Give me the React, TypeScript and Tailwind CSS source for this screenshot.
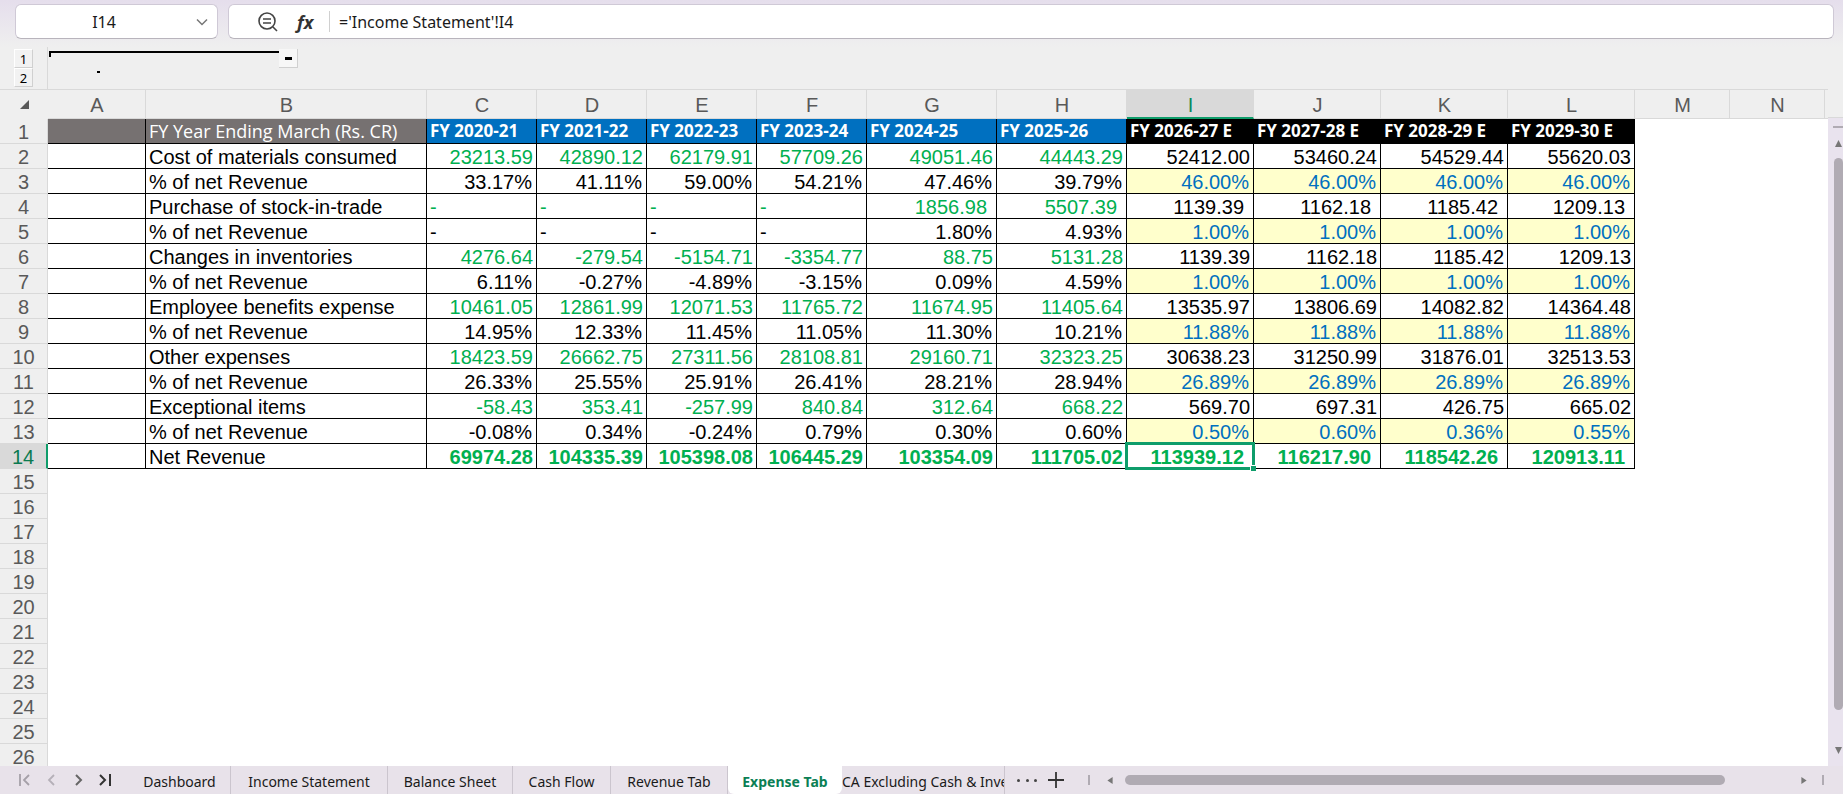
import React, { useState } from "react";
import clsx from "clsx";

type Kind = "label" | "amount" | "percent" | "total";

interface SheetRow {
  label: string;
  kind: Kind;
  values: string[];
}

const columns = [
  { name: "A", width: 98 },
  { name: "B", width: 281 },
  { name: "C", width: 110 },
  { name: "D", width: 110 },
  { name: "E", width: 110 },
  { name: "F", width: 110 },
  { name: "G", width: 130 },
  { name: "H", width: 130 },
  { name: "I", width: 127 },
  { name: "J", width: 127 },
  { name: "K", width: 127 },
  { name: "L", width: 127 },
  { name: "M", width: 95 },
  { name: "N", width: 95 },
];

const years = [
  "FY 2020-21", "FY 2021-22", "FY 2022-23", "FY 2023-24", "FY 2024-25", "FY 2025-26",
  "FY 2026-27 E", "FY 2027-28 E", "FY 2028-29 E", "FY 2029-30 E",
];

const rows: SheetRow[] = [
  { label: "Cost of materials consumed", kind: "amount", values: ["23213.59", "42890.12", "62179.91", "57709.26", "49051.46", "44443.29", "52412.00", "53460.24", "54529.44", "55620.03"] },
  { label: "% of net Revenue", kind: "percent", values: ["33.17%", "41.11%", "59.00%", "54.21%", "47.46%", "39.79%", "46.00%", "46.00%", "46.00%", "46.00%"] },
  { label: "Purchase of stock-in-trade", kind: "amount", values: ["-", "-", "-", "-", "1856.98", "5507.39", "1139.39", "1162.18", "1185.42", "1209.13"] },
  { label: "% of net Revenue", kind: "percent", values: ["-", "-", "-", "-", "1.80%", "4.93%", "1.00%", "1.00%", "1.00%", "1.00%"] },
  { label: "Changes in inventories", kind: "amount", values: ["4276.64", "-279.54", "-5154.71", "-3354.77", "88.75", "5131.28", "1139.39", "1162.18", "1185.42", "1209.13"] },
  { label: "% of net Revenue", kind: "percent", values: ["6.11%", "-0.27%", "-4.89%", "-3.15%", "0.09%", "4.59%", "1.00%", "1.00%", "1.00%", "1.00%"] },
  { label: "Employee benefits expense", kind: "amount", values: ["10461.05", "12861.99", "12071.53", "11765.72", "11674.95", "11405.64", "13535.97", "13806.69", "14082.82", "14364.48"] },
  { label: "% of net Revenue", kind: "percent", values: ["14.95%", "12.33%", "11.45%", "11.05%", "11.30%", "10.21%", "11.88%", "11.88%", "11.88%", "11.88%"] },
  { label: "Other expenses", kind: "amount", values: ["18423.59", "26662.75", "27311.56", "28108.81", "29160.71", "32323.25", "30638.23", "31250.99", "31876.01", "32513.53"] },
  { label: "% of net Revenue", kind: "percent", values: ["26.33%", "25.55%", "25.91%", "26.41%", "28.21%", "28.94%", "26.89%", "26.89%", "26.89%", "26.89%"] },
  { label: "Exceptional items", kind: "amount", values: ["-58.43", "353.41", "-257.99", "840.84", "312.64", "668.22", "569.70", "697.31", "426.75", "665.02"] },
  { label: "% of net Revenue", kind: "percent", values: ["-0.08%", "0.34%", "-0.24%", "0.79%", "0.30%", "0.60%", "0.50%", "0.60%", "0.36%", "0.55%"] },
  { label: "Net Revenue", kind: "total", values: ["69974.28", "104335.39", "105398.08", "106445.29", "103354.09", "111705.02", "113939.12", "116217.90", "118542.26", "120913.11"] },
];

const emptyRows = Array.from({ length: 12 }, (_, i) => i + 15);

const tabs = [
  { name: "Dashboard", width: "w-[102px]" },
  { name: "Income Statement", width: "w-[157px]" },
  { name: "Balance Sheet", width: "w-[125px]" },
  { name: "Cash Flow", width: "w-[98px]" },
  { name: "Revenue Tab", width: "w-[117px]" },
  { name: "Expense Tab", width: "w-[114px]" },
];

// Purchase of stock-in-trade and projected totals use a format with a trailing space
const isIndented = (row: SheetRow, i: number) =>
  (row.label.startsWith("Purchase") && i >= 4) || (row.kind === "total" && i >= 6);

const valueColor = (row: SheetRow, i: number) => {
  if (row.kind === "total") return "text-[#00b050] font-bold";
  if (row.kind === "amount") return i < 6 ? "text-[#00b050]" : "text-black";
  return i < 6 ? "text-black" : "text-[#0070c0] bg-[#ffffcc]";
};

const FormulaBar: React.FC = () => {
  const [formula, setFormula] = useState("='Income Statement'!I4");

  return (
    <div className="flex h-[47px] items-start gap-[10px] bg-linear-to-b from-[#e5deec] to-[#efefef] pl-[15px] pr-[9px] pt-1 font-['Noto_Sans',sans-serif] text-[16px] text-[#1a1a1a]">
      <div className="flex h-[35px] w-[203px] shrink-0 items-center rounded-md border border-[#cfc9d6] border-b-[#b8b4bc] bg-white pr-[5px]">
        <input
          aria-label="Name box"
          defaultValue="I14"
          className="w-full min-w-0 flex-1 bg-transparent text-center outline-none"
        />
        <button aria-label="Open name list" className="flex w-5 justify-center">
          <svg width="12" height="8" viewBox="0 0 12 8" fill="none" stroke="#777" strokeWidth="1.5">
            <path d="M1 1.5 6 6.5 11 1.5" />
          </svg>
        </button>
      </div>
      <div className="flex h-[35px] flex-1 items-center rounded-md border border-[#cfc9d6] border-b-[#b8b4bc] bg-white pl-7">
        <button aria-label="Search formula">
          <svg width="22" height="22" viewBox="0 0 22 22" fill="none" stroke="#444" strokeWidth="1.6">
            <circle cx="10" cy="10" r="8" />
            <path d="M6 8h8M6 12h8M16 16l4 4" />
          </svg>
        </button>
        <button aria-label="Insert function" className="ml-4 w-6 pl-0.5 text-left font-['Noto_Sans',sans-serif] text-[18px] font-bold italic leading-6 text-[#333]">
          fx
        </button>
        <span className="ml-[10px] h-[21px] w-px bg-[#d0d0d0]" />
        <input
          aria-label="Formula"
          value={formula}
          onChange={e => setFormula(e.target.value)}
          className="ml-[9px] min-w-0 flex-1 bg-transparent outline-none"
        />
      </div>
    </div>
  );
};

const OutlineBar: React.FC = () => (
  <div className="flex h-[42px] bg-[#efefef] font-['Noto_Sans',sans-serif]">
    <div className="flex w-[48px] shrink-0 flex-col items-center border-r border-[#d9d9d9] pt-[2px]">
      {["1", "2"].map(level => (
        <button
          key={level}
          className="h-[19px] w-[19px] border border-b-[#d0d0d0] border-l-white border-r-[#d0d0d0] border-t-white bg-[#f2f2f2] text-[13px] leading-[19px] text-black"
        >
          {level}
        </button>
      ))}
    </div>
    <div className="flex items-start pl-[1px] pt-[2px]">
      <div className="mt-[2px] flex h-[22px] w-[230px] items-end border-t-2 border-black">
        <span className="h-[4px] w-[2px] self-start bg-black" />
        <span className="ml-[46px] h-[2px] w-[3px] bg-black" />
      </div>
      <button
        aria-label="Collapse group"
        className="flex h-[19px] w-[19px] items-center justify-center border-b border-r border-[#d0d0d0] bg-[#f7f7f7]"
      >
        <span className="h-[3px] w-[7px] bg-black" />
      </button>
    </div>
  </div>
);

const RowHeader: React.FC<{ row: number }> = ({ row }) => (
  <th
    scope="row"
    className={clsx(
      "border-b p-0 pt-0.5 text-center font-normal",
      row === 14
        ? "border-b-[#d9d9d9] border-r-2 border-r-[#0f9d6b] bg-[#d9d9d9] text-[#0b7a50]"
        : "border-r border-[#d9d9d9] bg-[#efefef] text-[#595959]"
    )}
  >
    {row}
  </th>
);

const Sheet: React.FC = () => (
  <table className="w-full table-fixed border-separate border-spacing-0 font-['Liberation_Sans',Arial,sans-serif] text-[20px] leading-[22px] whitespace-nowrap">
    <colgroup>
      <col className="w-[48px]" />
      {columns.map(col => (
        <col key={col.name} style={{ width: col.width }} />
      ))}
      <col />
    </colgroup>
    <thead>
      <tr className="h-[30px] bg-[#efefef] text-[#595959]">
        <th className="border-t border-[#d9d9d9] p-0">
          <svg className="ml-5" width="10" height="9" viewBox="0 0 10 9">
            <path d="M9 0v9H0z" fill="#595959" />
          </svg>
        </th>
        {columns.map(col => (
          <th
            key={col.name}
            scope="col"
            className={clsx(
              "border-r border-t border-[#d9d9d9] p-0 pt-0.5 pl-px font-normal",
              col.name === "I"
                ? "border-b-2 border-b-[#0f9d6b] bg-[#d9d9d9] text-[#0b8a5c]"
                : "border-b"
            )}
          >
            {col.name}
          </th>
        ))}
        <th className="border-b border-t border-[#d9d9d9] p-0" />
      </tr>
    </thead>
    <tbody>
      <tr className="h-[25px] text-white">
        <RowHeader row={1} />
        <td className="border-b border-r border-black bg-[#767171] p-0" />
        <td className="border-b border-r border-black bg-[#767171] p-0 pl-[3px] font-['Open_Sans',sans-serif] text-[18px]">
          FY Year Ending March (Rs. CR)
        </td>
        {years.map((year, i) => (
          <td
            key={year}
            className={clsx(
              "border-b border-r border-black p-0 pl-[3px] font-['Open_Sans',sans-serif] text-[17px] font-bold",
              i < 6 ? "bg-[#0070c0]" : "bg-black"
            )}
          >
            {year}
          </td>
        ))}
      </tr>
      {rows.map((row, r) => (
        <tr key={r} className="h-[25px]">
          <RowHeader row={r + 2} />
          <td className="border-b border-r border-black p-0" />
          <td className="border-b border-r border-black p-0 pl-[3px] pt-0.5">{row.label}</td>
          {row.values.map((value, i) => (
            <td
              key={i}
              className={clsx(
                "border-b border-r border-black p-0 pt-0.5",
                valueColor(row, i),
                value === "-" ? "pl-[3px] text-left" : "text-right",
                isIndented(row, i) ? "pr-[9px]" : row.kind === "percent" ? "pr-1" : "pr-[3px]",
                row.kind === "total" && i === 6 && "relative"
              )}
            >
              {value}
              {row.kind === "total" && i === 6 && (
                <span className="pointer-events-none absolute -bottom-0.5 -left-0.5 -right-0.5 -top-0.5 border-3 border-[#0f9d6b]">
                  <span className="absolute -bottom-1 -right-1 h-[6px] w-[6px] border-l border-t border-white bg-[#0f9d6b]" />
                </span>
              )}
            </td>
          ))}
        </tr>
      ))}
      {emptyRows.map(row => (
        <tr key={row} className="h-[25px]">
          <RowHeader row={row} />
        </tr>
      ))}
    </tbody>
  </table>
);

const VerticalScroll: React.FC = () => (
  <div className="flex w-[15px] shrink-0 flex-col bg-[#efefef]">
    <div className="h-[29px] border-b border-[#d9d9d9]" />
    <div className="flex flex-1 flex-col items-end bg-[#e9e3ee]">
      <span className="mt-2 h-[2px] w-[10px] bg-[#b0abb3]" />
      <svg className="mr-[1px] mt-3" width="7" height="7" viewBox="0 0 8 8">
        <path d="M4 0 8 8H0z" fill="#777" />
      </svg>
      <span className="mt-[11px] w-[9px] flex-1 rounded-full bg-[#b0abb3]" />
      <svg className="mb-3 mr-[1px] mt-[37px]" width="7" height="7" viewBox="0 0 8 8">
        <path d="M0 0h8L4 8z" fill="#777" />
      </svg>
    </div>
  </div>
);

const TabBar: React.FC = () => {
  const [active, setActive] = useState("Expense Tab");

  return (
    <div className="flex h-[28px] items-stretch bg-[#e8e2ea] font-['Noto_Sans',sans-serif] text-[14px] text-[#1a1a1a]">
      <div className="flex w-[129px] shrink-0 items-center gap-[14px] pl-[18px]">
        <button aria-label="First sheet">
          <svg width="13" height="14" viewBox="0 0 13 14" fill="none" stroke="#a5a0a8" strokeWidth="1.8">
            <path d="M2 1v12M11 2 6 7l5 5" />
          </svg>
        </button>
        <button aria-label="Previous sheet">
          <svg width="13" height="14" viewBox="0 0 13 14" fill="none" stroke="#b5b0b8" strokeWidth="1.8">
            <path d="M9 2 4 7l5 5" />
          </svg>
        </button>
        <button aria-label="Next sheet">
          <svg width="13" height="14" viewBox="0 0 13 14" fill="none" stroke="#666" strokeWidth="2">
            <path d="M4 2 9 7l-5 5" />
          </svg>
        </button>
        <button aria-label="Last sheet">
          <svg width="13" height="14" viewBox="0 0 13 14" fill="none" stroke="#333" strokeWidth="2">
            <path d="M1 2 6 7l-5 5M11 1v12" />
          </svg>
        </button>
      </div>
      {tabs.map(tab => (
        <button
          key={tab.name}
          onClick={() => setActive(tab.name)}
          className={clsx(
            "shrink-0 whitespace-nowrap pt-0.5",
            tab.width,
            tab.name === active
              ? "rounded-b-md bg-white font-bold text-[#0b7f55]"
              : "border-r border-[#cbc5ce]"
          )}
        >
          {tab.name}
        </button>
      ))}
      <button className="w-[163px] shrink-0 overflow-hidden whitespace-nowrap border-r border-[#cbc5ce] pt-0.5 text-left">
        CA Excluding Cash & Inve
      </button>
      <button aria-label="More sheets" className="ml-3 flex w-5 items-center justify-between">
        <span className="h-[3px] w-[3px] rounded-full bg-[#444]" />
        <span className="h-[3px] w-[3px] rounded-full bg-[#444]" />
        <span className="h-[3px] w-[3px] rounded-full bg-[#444]" />
      </button>
      <button aria-label="Add sheet" className="ml-[10px]">
        <svg width="18" height="18" viewBox="0 0 18 18" stroke="#333" strokeWidth="1.8">
          <path d="M9 1v16M1 9h16" />
        </svg>
      </button>
      <div className="ml-[23px] flex flex-1 items-center pr-[19px]">
        <span className="h-[10px] w-[2px] bg-[#b0abb3]" />
        <svg className="ml-[17px]" width="6" height="7" viewBox="0 0 6 8">
          <path d="M6 0v8L0 4z" fill="#777" />
        </svg>
        <span className="ml-3 h-[10px] flex-1 rounded-full bg-[#b0abb3]" />
        <svg className="ml-[76px]" width="6" height="7" viewBox="0 0 6 8">
          <path d="M0 0v8l6-4z" fill="#777" />
        </svg>
        <span className="ml-[15px] h-[10px] w-[2px] bg-[#b0abb3]" />
      </div>
    </div>
  );
};

const App: React.FC = () => {
  return (
    <div className="flex h-screen flex-col overflow-hidden bg-[#efefef]">
      <FormulaBar />
      <OutlineBar />
      <div className="flex min-h-0 flex-1">
        <div className="min-w-0 flex-1 overflow-hidden bg-white">
          <Sheet />
        </div>
        <VerticalScroll />
      </div>
      <TabBar />
    </div>
  );
};

export default App;
